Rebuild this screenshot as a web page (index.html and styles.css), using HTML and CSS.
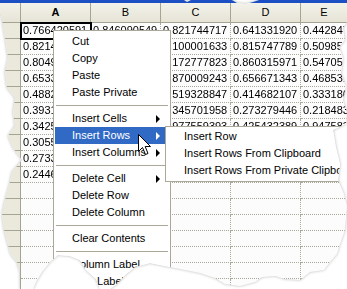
FILE: index.html
```html
<!DOCTYPE html>
<html lang="en">
<head>
  <meta charset="UTF-8" />
  <title>Grid context menu</title>
  <link rel="stylesheet" href="styles.css">
</head>
<body>
  <div class="page">
    <div class="sheet">
      <div class="titlebar"></div>

      <div class="grid">
        <div class="corner"></div>
        <div class="colhead active-col">A</div>
        <div class="colhead">B</div>
        <div class="colhead">C</div>
        <div class="colhead">D</div>
        <div class="colhead last">E</div>

        <div class="rowhead"></div><div class="cell sel">0.766420591</div><div class="cell">0.846090549</div><div class="cell">0.821744717</div><div class="cell">0.641331920</div><div class="cell last">0.442847315</div>
        <div class="rowhead"></div><div class="cell">0.821465203</div><div class="cell">0.532018846</div><div class="cell">0.100001633</div><div class="cell">0.815747789</div><div class="cell last">0.509857120</div>
        <div class="rowhead"></div><div class="cell">0.804939218</div><div class="cell">0.715602443</div><div class="cell">0.172777823</div><div class="cell">0.860315971</div><div class="cell last">0.547056318</div>
        <div class="rowhead"></div><div class="cell">0.653370129</div><div class="cell">0.288104519</div><div class="cell">0.870009243</div><div class="cell">0.656671343</div><div class="cell last">0.468531907</div>
        <div class="rowhead"></div><div class="cell">0.488215764</div><div class="cell">0.604417782</div><div class="cell">0.519328847</div><div class="cell">0.414682107</div><div class="cell last">0.333186402</div>
        <div class="rowhead"></div><div class="cell">0.393185002</div><div class="cell">0.157330261</div><div class="cell">0.345701958</div><div class="cell">0.273279446</div><div class="cell last">0.218483359</div>
        <div class="rowhead"></div><div class="cell">0.342571438</div><div class="cell">0.820913675</div><div class="cell">0.977559393</div><div class="cell">0.425432389</div><div class="cell last">0.947583210</div>
        <div class="rowhead"></div><div class="cell">0.305546827</div><div class="cell">0.411870394</div><div class="cell">0.630281157</div><div class="cell">0.190844721</div><div class="cell last">0.712904836</div>
        <div class="rowhead"></div><div class="cell">0.273306154</div><div class="cell">0.098457713</div><div class="cell">0.556019482</div><div class="cell">0.834670295</div><div class="cell last">0.361527740</div>
        <div class="rowhead"></div><div class="cell">0.244612075</div><div class="cell">0.723904618</div><div class="cell">0.049316285</div><div class="cell">0.582217064</div><div class="cell last">0.675093418</div>
        <div class="rowhead"></div><div class="cell"></div><div class="cell"></div><div class="cell"></div><div class="cell"></div><div class="cell last"></div>
        <div class="rowhead"></div><div class="cell"></div><div class="cell"></div><div class="cell"></div><div class="cell"></div><div class="cell last"></div>
        <div class="rowhead"></div><div class="cell"></div><div class="cell"></div><div class="cell"></div><div class="cell"></div><div class="cell last"></div>
        <div class="rowhead"></div><div class="cell"></div><div class="cell"></div><div class="cell"></div><div class="cell"></div><div class="cell last"></div>
        <div class="rowhead"></div><div class="cell"></div><div class="cell"></div><div class="cell"></div><div class="cell"></div><div class="cell last"></div>
        <div class="rowhead"></div><div class="cell"></div><div class="cell"></div><div class="cell"></div><div class="cell"></div><div class="cell last"></div>
        <div class="rowhead"></div><div class="cell"></div><div class="cell"></div><div class="cell"></div><div class="cell"></div><div class="cell last"></div>
      </div>

      <ul class="menu">
        <li>Cut</li>
        <li>Copy</li>
        <li>Paste</li>
        <li>Paste Private</li>
        <li class="sep"></li>
        <li>Insert Cells <span class="arrow"></span></li>
        <li class="active">Insert Rows <span class="arrow"></span></li>
        <li>Insert Columns <span class="arrow"></span></li>
        <li class="sep"></li>
        <li>Delete Cell <span class="arrow"></span></li>
        <li>Delete Row</li>
        <li>Delete Column</li>
        <li class="sep"></li>
        <li>Clear Contents</li>
        <li class="sep"></li>
        <li>Column Label...</li>
        <li>Row Label</li>
      </ul>

      <ul class="menu submenu">
        <li>Insert Row</li>
        <li>Insert Rows From Clipboard</li>
        <li>Insert Rows From Private Clipboard</li>
      </ul>

      <svg class="cursor" width="14" height="23" viewBox="0 0 14 23">
        <path d="M0.5 0.5 L0.5 17.5 L4.5 13.5 L7.5 20.5 L10 19.5 L7.2 12.5 L12.5 12.5 Z" fill="#fff" stroke="#000" stroke-width="1" stroke-linejoin="miter"/>
      </svg>
    </div>
  </div>
</body>
</html>
```

FILE: styles.css
```css
body {
  margin: 0;
  background: #fff;
  font-family: "Liberation Sans", Arial, sans-serif;
  font-size: 11px;
}

.page {
  width: 347px;
  height: 289px;
  filter: drop-shadow(0 0 1.5px rgba(0, 0, 0, 0.28));
}

.sheet {
  position: relative;
  width: 347px;
  height: 289px;
  overflow: hidden;
  background: #fcfcfc;
  clip-path: polygon(
    0 0, 184px 0, 187px 2px, 191px 0, 232px 0, 237px 3px, 246px 4px, 253px 2px, 259px 0,
    347px 0, 347px 22px, 343px 28px, 345px 40px, 339px 47px, 343px 58px, 341px 74px,
    346px 86px, 343px 100px, 347px 112px, 346px 124px, 333px 130px, 336px 148px,
    340px 164px, 338px 180px, 344px 194px, 347px 206px, 345px 230px, 340px 244px,
    337px 254px, 330px 262px, 324px 270px, 310px 272px, 300px 280px, 285px 279px,
    275px 276px, 262px 277px, 255px 282px, 240px 286px, 225px 284px, 215px 278px,
    200px 273px, 185px 270px, 165px 266px, 150px 263px, 135px 267px, 125px 275px,
    118px 283px, 110px 289px, 100px 289px, 96px 279px, 86px 270px, 80px 260px,
    70px 256px, 58px 255px, 50px 262px, 42px 272px, 36px 282px, 33px 289px, 20px 289px,
    20px 272px, 17px 262px, 11px 255px, 8px 245px, 4px 230px, 2px 214px, 5px 200px,
    9px 186px, 12px 172px, 22px 160px, 13px 148px, 8px 136px, 15px 126px, 13px 112px,
    15px 98px, 7px 88px, 5px 72px, 8px 58px, 6px 44px, 4px 32px, 2px 20px, 0 10px
  );
}

.titlebar {
  height: 3px;
  background: #1c4fc4;
}

.grid {
  display: grid;
  grid-template-columns: 21px 70px 70px 70px 70px 1fr;
  grid-auto-rows: 16px;
  grid-template-rows: 20px;
}

.corner,
.colhead {
  background: linear-gradient(#f3f2ea, #e6e4d6);
  border-right: 1px solid #a5a391;
  border-bottom: 1px solid #a5a391;
  box-sizing: border-box;
  text-align: center;
  line-height: 19px;
  color: #000;
}

.colhead.last {
  border-right: none;
}

.active-col {
  font-weight: bold;
}

.rowhead {
  background: #ebe9dc;
  border-right: 1px solid #a5a391;
  border-bottom: 1px solid #a5a391;
  box-sizing: border-box;
}

.cell {
  border-right: 1px dotted #aaa898;
  border-bottom: 1px dotted #aaa898;
  box-sizing: border-box;
  padding-left: 2px;
  line-height: 15px;
  white-space: nowrap;
  overflow: hidden;
  color: #000;
}

.cell.last {
  border-right: none;
}

.sel {
  outline: 2px solid #000;
  outline-offset: -1px;
  position: relative;
  z-index: 1;
}

.menu {
  position: absolute;
  left: 53px;
  top: 30px;
  width: 118px;
  box-sizing: border-box;
  margin: 0;
  padding: 2px 1px;
  list-style: none;
  background: #fff;
  border: 1px solid #aca899;
  z-index: 2;
}

.menu li {
  height: 17px;
  line-height: 17px;
  padding: 0 9px 0 17px;
  display: flex;
  align-items: center;
  justify-content: space-between;
  white-space: nowrap;
  color: #000;
}

.menu li.sep {
  height: 1px;
  padding: 0;
  margin: 4px 1px;
  background: #aca899;
}

.menu li.active {
  background: #316ac5;
  color: #fff;
}

.arrow {
  width: 0;
  height: 0;
  border-left: 4px solid currentColor;
  border-top: 4px solid transparent;
  border-bottom: 4px solid transparent;
}

.submenu {
  left: 165px;
  top: 126px;
  width: 210px;
  padding: 1px 1px 2px;
  z-index: 3;
}

.cursor {
  position: absolute;
  left: 138px;
  top: 134px;
  z-index: 4;
}
```
